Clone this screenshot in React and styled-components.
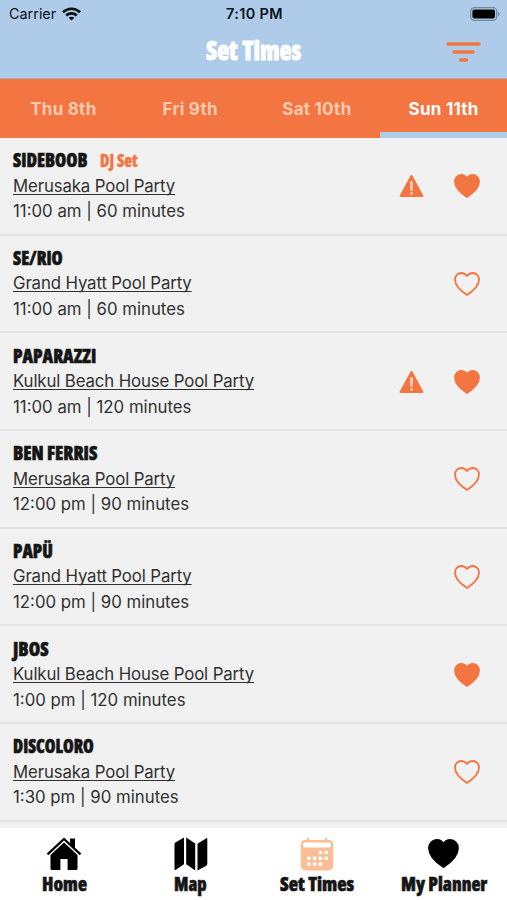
import { useLayoutEffect, useRef, useState } from "react";
import styled, { createGlobalStyle } from "styled-components";

const ORANGE = "#f37541";
const SKY = "#aecce9";

const GlobalStyle = createGlobalStyle`
  * {
    box-sizing: border-box;
  }
  body {
    margin: 0;
    font-family: Inter, "Liberation Sans", sans-serif;
    color: #303030;
  }
`;

const Screen = styled.div`
  width: 507px;
  height: 900px;
  display: flex;
  flex-direction: column;
  overflow: hidden;
  background: #f1f1f1;
`;

const Header = styled.header`
  flex: none;
  height: 79px;
  background: ${SKY};
  border-bottom: 1px solid #b0a9a8;
`;

const StatusBar = styled.div`
  height: 27px;
  padding: 0 7px 0 9px;
  display: grid;
  grid-template-columns: 1fr auto 1fr;
  align-items: center;
  color: #0c1117;
  font-size: 14.4px;
  line-height: 27px;
  svg {
    display: block;
  }
`;

const Carrier = styled.div`
  display: flex;
  align-items: center;
  gap: 6px;
`;

const Clock = styled.div`
  font-weight: 600;
  font-size: 14.4px;
  letter-spacing: 0.4px;
`;

const Battery = styled.div`
  justify-self: end;
`;

const TitleBar = styled.div`
  height: 48px;
  padding: 0 26px;
  display: grid;
  grid-template-columns: 1fr auto 1fr;
  align-items: center;
`;

const FilterButton = styled.button`
  grid-column: 3;
  justify-self: end;
  padding: 2px 0 0;
  border: 0;
  background: none;
  svg {
    display: block;
  }
`;

const FitBox = styled.span`
  display: block;
  flex: none;
  width: ${(props) => props.$width}px;
  height: ${(props) => props.$size * 1.3}px;
  font-family: "Open Sans", "Liberation Sans", sans-serif;
  font-stretch: 75%;
  font-weight: 800;
  font-size: ${(props) => props.$size}px;
  line-height: 1.3;
  color: ${(props) => props.$color};
  -webkit-text-stroke: ${(props) => props.$stroke}px ${(props) => props.$color};
`;

const FitInner = styled.span`
  display: inline-block;
  white-space: nowrap;
  transform-origin: 0 50%;
`;

// Squeezes the text horizontally into the given width
const Condensed = ({ width, size, color = "#151515", stroke = 0.6, children }) => {
  const ref = useRef(null);
  const [scale, setScale] = useState(1);

  useLayoutEffect(() => {
    setScale(width / ref.current.offsetWidth);
  }, [width]);

  return (
    <FitBox $width={width} $size={size} $color={color} $stroke={stroke}>
      <FitInner ref={ref} style={{ transform: `scaleX(${scale})` }}>
        {children}
      </FitInner>
    </FitBox>
  );
};

const Tabs = styled.div`
  flex: none;
  height: 59px;
  display: grid;
  grid-template-columns: repeat(4, 1fr);
  background: ${ORANGE};
`;

const Tab = styled.button`
  padding: 6px 0 0;
  border: 0;
  border-bottom: 6px solid ${(props) => (props.$active ? SKY : "transparent")};
  background: none;
  font-family: inherit;
  font-size: 17px;
  font-weight: 650;
  letter-spacing: 0.25px;
  color: ${(props) => (props.$active ? "#fff" : "#fbc9b1")};
`;

const List = styled.div`
  flex: 1;
  min-height: 0;
  overflow: hidden;
`;

const Row = styled.div`
  height: 97.7px;
  padding: 1px 27px 0 13px;
  display: flex;
  align-items: center;
  border-bottom: 2px solid #e3e3e3;
`;

const Info = styled.div`
  flex: 1;
`;

const NameLine = styled.div`
  height: 26px;
  display: flex;
  align-items: center;
  gap: 13px;
`;

const Venue = styled.div`
  height: 25.7px;
  line-height: 25.7px;
  font-size: 16.8px;
  letter-spacing: -0.12px;
  text-decoration: underline;
  text-decoration-thickness: 1px;
  text-underline-offset: 2px;
  text-decoration-skip-ink: none;
`;

const Time = styled.div`
  height: 25.7px;
  line-height: 25.7px;
  font-size: 16.8px;
`;

const Actions = styled.div`
  display: flex;
  align-items: center;
  gap: 30px;
  svg {
    display: block;
  }
`;

const BottomNav = styled.nav`
  flex: none;
  height: 72px;
  padding-left: 1px;
  display: grid;
  grid-template-columns: repeat(4, 1fr);
  background: #fff;
`;

const NavItem = styled.div`
  display: flex;
  flex-direction: column;
  align-items: center;
  padding-top: 8px;
`;

const NavIcon = styled.div`
  height: 35px;
  display: flex;
  align-items: center;
`;

const HeartIcon = ({ filled, color = ORANGE, width = 26, height = 24 }) => (
  <svg width={width} height={height} viewBox="0 0 26 24" preserveAspectRatio="none">
    <path
      d="M13 4.1C11.6 2 9.5 1 7.3 1C3.7 1 1 3.9 1 7.6C1 14.2 7.2 19.3 13 23C18.8 19.3 25 14.2 25 7.6C25 3.9 22.3 1 18.7 1C16.5 1 14.4 2 13 4.1Z"
      fill={filled ? color : "none"}
      stroke={color}
      strokeWidth="1.8"
      strokeLinejoin="round"
    />
  </svg>
);

const WarningIcon = () => (
  <svg width="25" height="24" viewBox="0 0 26 24">
    <path
      d="M13 2L24 22.2H2Z"
      fill={ORANGE}
      stroke={ORANGE}
      strokeWidth="2.6"
      strokeLinejoin="round"
    />
    <path d="M11.6 7.2H14.4L14.1 17H11.9Z" fill="#f6ded4" />
    <circle cx="13" cy="19.8" r="1.4" fill="#f6ded4" />
  </svg>
);

const WifiIcon = () => (
  <svg width="19" height="14" viewBox="0 0 19 14" fill="none" stroke="#0c0f14" strokeWidth="2.6">
    <path d="M1 5.2C5.8 .6 13.2 .6 18 5.2" />
    <path d="M4.2 8.5C7.2 5.7 11.8 5.7 14.8 8.5" />
    <path d="M9.5 13.6L6.6 10.8C8.2 9.3 10.8 9.3 12.4 10.8Z" fill="#0c0f14" stroke="none" />
  </svg>
);

const BatteryIcon = () => (
  <svg width="30" height="14" viewBox="0 0 30 14">
    <rect x=".7" y=".7" width="26" height="12.6" rx="3.6" fill="none" stroke="#7189a0" strokeWidth="1.2" />
    <rect x="2.4" y="2.4" width="22.6" height="9.2" rx="2" fill="#000" />
    <path d="M28 4.7C30 5.3 30 8.7 28 9.3Z" fill="#7189a0" />
  </svg>
);

const FilterIcon = () => (
  <svg width="35" height="20" viewBox="0 0 35 20" stroke={ORANGE} strokeWidth="3.4" strokeLinecap="round">
    <path d="M2 2H33M8 10H27M14.7 18H20.5" />
  </svg>
);

const HomeIcon = () => (
  <svg width="36" height="36" viewBox="0 0 36 36">
    <path d="M24 2.5H29V13L24 8.5Z" />
    <path d="M1.5 18.4L18 3L34.5 18.4" fill="none" stroke="#000" strokeWidth="2.2" />
    <path d="M18 6.6L31.5 19V32.5Q31.5 34 30 34H21.6V23H14.4V34H6Q4.5 34 4.5 32.5V19Z" />
  </svg>
);

const MapIcon = () => (
  <svg width="34" height="36" viewBox="0 0 34 36">
    <path d="M.5 8.5Q.5 7 1.8 6.2L10 1.6V28.3L1.5 34Q.5 34.4 .5 33Z" />
    <path d="M12.2 1.6L21.2 7.5V34.4L12.2 28.3Z" />
    <path d="M23.5 7.8L32.4 2.2Q33.3 1.8 33.3 3V27.5Q33.3 29 32.3 29.7L23.5 34.5Z" />
  </svg>
);

const DOTS = [
  [20.4, 16.5], [26.2, 16.5],
  [8.8, 22.3], [14.6, 22.3], [20.4, 22.3], [26.2, 22.3],
  [8.8, 28], [14.6, 28], [20.4, 28],
];

const CalendarIcon = () => (
  <svg width="34" height="36" viewBox="0 0 34 36">
    <path d="M8 3V6M26 3V6" stroke="#fbbd93" strokeWidth="2.6" strokeLinecap="round" />
    <rect x=".8" y="4" width="32.4" height="30.4" rx="4.5" fill="#fbbd93" />
    <rect x="3" y="6.5" width="28" height="5" rx="2" fill="#fff" />
    {DOTS.map(([x, y]) => (
      <rect key={`${x}-${y}`} x={x - 1.8} y={y - 1.8} width="3.6" height="3.6" rx="1" fill="#fff" />
    ))}
  </svg>
);

const days = ["Thu 8th", "Fri 9th", "Sat 10th", "Sun 11th"];

const sets = [
  { name: "SIDEBOOB", width: 74, tag: "DJ Set", venue: "Merusaka Pool Party", time: "11:00 am | 60 minutes", clash: true, liked: true },
  { name: "SE/RIO", width: 50, venue: "Grand Hyatt Pool Party", time: "11:00 am | 60 minutes" },
  { name: "PAPARAZZI", width: 83, venue: "Kulkul Beach House Pool Party", time: "11:00 am | 120 minutes", clash: true, liked: true },
  { name: "BEN FERRIS", width: 84, venue: "Merusaka Pool Party", time: "12:00 pm | 90 minutes" },
  { name: "PAPÜ", width: 40, venue: "Grand Hyatt Pool Party", time: "12:00 pm | 90 minutes" },
  { name: "JBOS", width: 36, venue: "Kulkul Beach House Pool Party", time: "1:00 pm | 120 minutes", liked: true },
  { name: "DISCOLORO", width: 81, venue: "Merusaka Pool Party", time: "1:30 pm | 90 minutes" },
];

const navItems = [
  { label: "Home", width: 45, icon: <HomeIcon /> },
  { label: "Map", width: 33, icon: <MapIcon /> },
  { label: "Set Times", width: 74, icon: <CalendarIcon /> },
  { label: "My Planner", width: 86, icon: <HeartIcon filled color="#000" width={31} height={29} /> },
];

const App = () => {
  return (
    <Screen>
      <GlobalStyle />
      <Header>
        <StatusBar>
          <Carrier>
            Carrier
            <WifiIcon />
          </Carrier>
          <Clock>7:10 PM</Clock>
          <Battery>
            <BatteryIcon />
          </Battery>
        </StatusBar>
        <TitleBar>
          <span />
          <Condensed width={95} size={26} color='#fff' stroke={0.8}>
            Set Times
          </Condensed>
          <FilterButton aria-label='Filter'>
            <FilterIcon />
          </FilterButton>
        </TitleBar>
      </Header>
      <Tabs>
        {days.map((day) => (
          <Tab key={day} $active={day === "Sun 11th"}>
            {day}
          </Tab>
        ))}
      </Tabs>
      <List>
        {sets.map((set) => (
          <Row key={set.name}>
            <Info>
              <NameLine>
                <Condensed width={set.width} size={19}>
                  {set.name}
                </Condensed>
                {set.tag && (
                  <Condensed width={38} size={17} color={ORANGE} stroke={0.3}>
                    {set.tag}
                  </Condensed>
                )}
              </NameLine>
              <Venue>{set.venue}</Venue>
              <Time>{set.time}</Time>
            </Info>
            <Actions>
              {set.clash && <WarningIcon />}
              <HeartIcon filled={set.liked} />
            </Actions>
          </Row>
        ))}
      </List>
      <BottomNav>
        {navItems.map((item) => (
          <NavItem key={item.label}>
            <NavIcon>{item.icon}</NavIcon>
            <Condensed width={item.width} size={20}>
              {item.label}
            </Condensed>
          </NavItem>
        ))}
      </BottomNav>
    </Screen>
  );
};

export default App;
